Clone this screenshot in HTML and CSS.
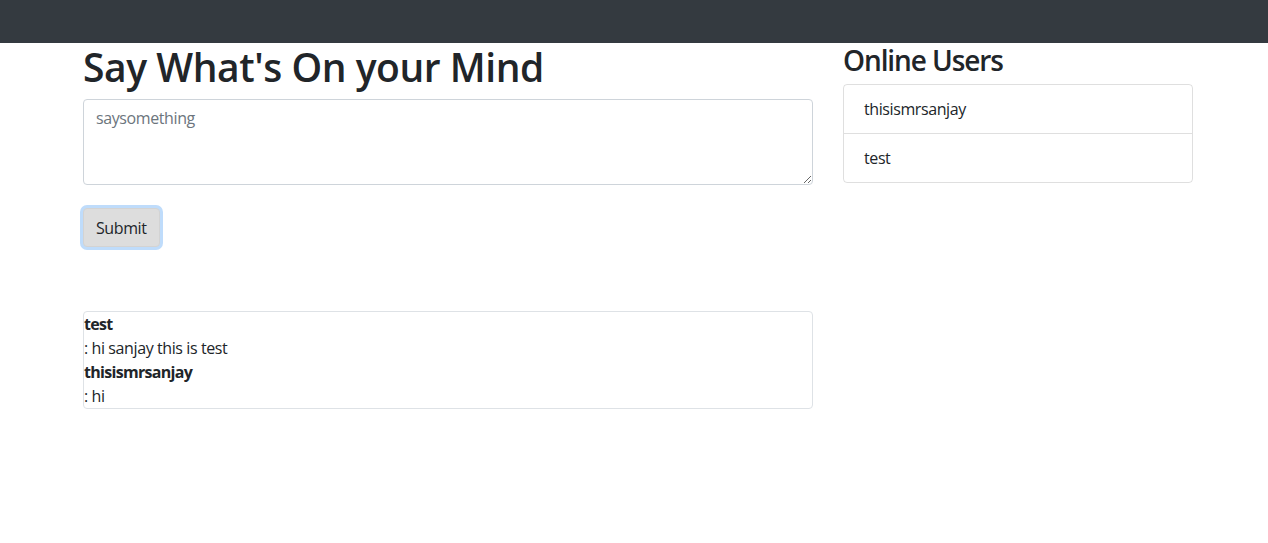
FILE: index.html
```html
<!DOCTYPE html>
<html lang="en">
<head>
<meta charset="utf-8">
<title>Chat</title>
<link rel="stylesheet" href="styles.css">
</head>
<body>
<nav class="navbar"></nav>
<main class="page">
  <section class="main-col">
    <h1 class="title">Say What's On your Mind</h1>
    <form class="post-form">
      <textarea class="say-input" rows="3" placeholder="saysomething"></textarea>
      <button type="button" class="submit-btn">Submit</button>
    </form>
    <div class="messages">
      <div class="msg-user">test</div>
      <div class="msg-text">: hi sanjay this is test</div>
      <div class="msg-user">thisismrsanjay</div>
      <div class="msg-text">: hi</div>
    </div>
  </section>
  <aside class="side-col">
    <h3 class="side-title">Online Users</h3>
    <ul class="user-list">
      <li class="user-item">thisismrsanjay</li>
      <li class="user-item">test</li>
    </ul>
  </aside>
</main>
</body>
</html>
```
FILE: styles.css
```css
* { box-sizing: border-box; }
html, body {
  margin: 0;
  padding: 0;
  background: #fff;
  color: #212529;
  font-family: "Open Sans", "Noto Sans", sans-serif;
  font-size: 16px;
  line-height: 24px;
  letter-spacing: -0.4px;
}
.navbar {
  height: 43px;
  background: #343a40;
}
.page {
  display: flex;
  gap: 30px;
  padding-left: 83px;
}
.main-col {
  width: 730px;
  display: flex;
  flex-direction: column;
}
.side-col {
  width: 350px;
}
.title {
  margin: 0 0 8px;
  font-size: 39px;
  line-height: 48px;
  font-weight: 600;
  letter-spacing: -0.45px;
}
.post-form {
  display: flex;
  flex-direction: column;
  align-items: flex-start;
}
.say-input {
  width: 100%;
  height: 86px;
  padding: 6px 12px;
  border: 1px solid #ced4da;
  border-radius: 4px;
  font: inherit;
  letter-spacing: -0.4px;
  color: #495057;
  resize: vertical;
  margin: 0;
}
.say-input::placeholder { color: #6c757d; }
.submit-btn {
  margin-top: 23px;
  height: 39px;
  padding: 6px 12px;
  font: inherit;
  letter-spacing: -0.4px;
  color: #212529;
  background: #dddddd;
  border: 1px solid #d3d3d3;
  border-radius: 4px;
  box-shadow: 0 0 0 3px #bfdcfb;
}
.messages {
  margin-top: 64px;
  border: 1px solid #dee2e6;
  border-radius: 4px;
}
.msg-user { font-weight: 700; letter-spacing: -0.7px; }
.side-title {
  margin: 0 0 7px;
  font-size: 28px;
  line-height: 34px;
  font-weight: 600;
  letter-spacing: -1.1px;
}
.user-list {
  list-style: none;
  margin: 0;
  padding: 0;
  border: 1px solid rgba(0,0,0,.125);
  border-radius: 4px;
}
.user-item {
  padding: 12px 20px;
}
.user-item + .user-item {
  border-top: 1px solid rgba(0,0,0,.125);
}
```
